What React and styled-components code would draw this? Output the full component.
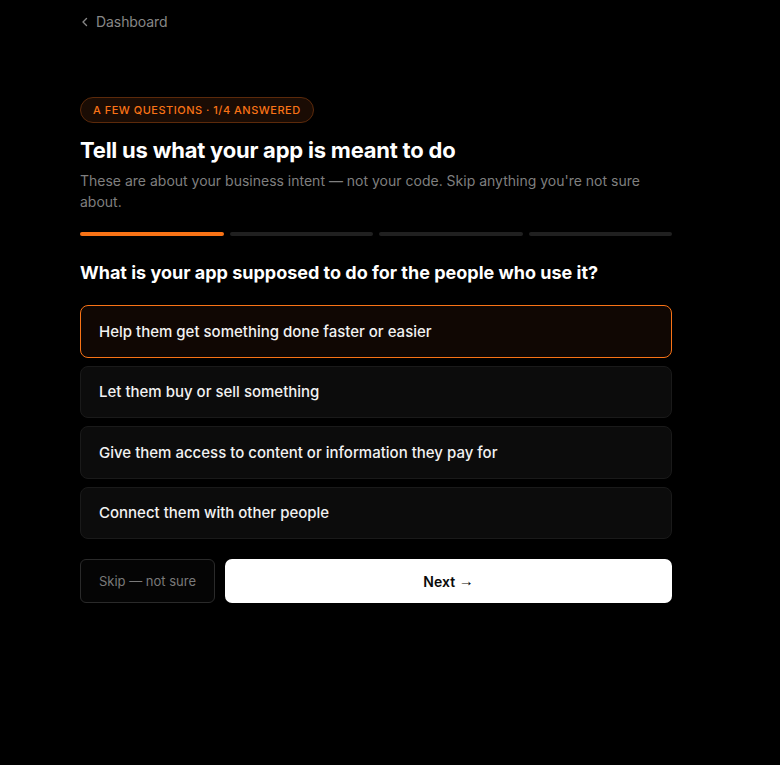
import React, { useState } from "react";
import styled, { createGlobalStyle } from "styled-components";

const Global = createGlobalStyle`
  html, body { margin: 0; padding: 0; background: #000; }
  body { font-family: Inter, "Noto Sans", sans-serif; color: #fff; -webkit-font-smoothing: antialiased; }
  * { box-sizing: border-box; }
`;

const Page = styled.div`
  min-height: 765px;
  background: #000;
  padding: 13px 0 40px 80px;
`;

const Column = styled.div`
  width: 592px;
  display: flex;
  flex-direction: column;
`;

const Back = styled.a`
  display: inline-flex;
  align-items: center;
  gap: 6px;
  color: #878787;
  font-size: 14px;
  line-height: 18px;
  letter-spacing: -0.005em;
  text-decoration: none;
  cursor: pointer;
  align-self: flex-start;
`;

const Badge = styled.div`
  align-self: flex-start;
  margin-top: 66px;
  height: 26px;
  padding: 0 12px;
  display: inline-flex;
  align-items: center;
  border-radius: 999px;
  border: 1px solid #5c2a0b;
  background: #1a0c04;
  color: #f97316;
  font-size: 11px;
  font-weight: 500;
  letter-spacing: 0.045em;
  text-transform: uppercase;
`;

const Title = styled.h1`
  margin: 13px 0 0;
  font-size: 22px;
  line-height: 28px;
  font-weight: 700;
  letter-spacing: -0.01em;
  color: #fff;
`;

const Sub = styled.p`
  margin: 6px 0 0;
  font-size: 14px;
  line-height: 21px;
  color: #7f7f7f;
`;

const Progress = styled.div`
  margin-top: 20px;
  display: grid;
  grid-template-columns: repeat(4, 1fr);
  gap: 6px;
`;

const Seg = styled.div`
  height: 4px;
  border-radius: 2px;
  background: ${(p) => (p.$done ? "#f97316" : "#202020")};
`;

const Question = styled.h2`
  margin: 25px 0 0;
  font-size: 18px;
  line-height: 24px;
  font-weight: 700;
  color: #fff;
`;

const Options = styled.div`
  margin-top: 20px;
  display: flex;
  flex-direction: column;
  gap: 8px;
`;

const Option = styled.button`
  display: flex;
  align-items: center;
  width: 100%;
  height: 52.5px;
  padding: 0 18px;
  border-radius: 8px;
  border: 1px solid ${(p) => (p.$selected ? "#f97316" : "#1a1a1a")};
  background: ${(p) => (p.$selected ? "#100703" : "#0c0c0c")};
  color: #f2f2f2;
  font-family: inherit;
  font-size: 15px;
  font-weight: 500;
  text-align: left;
  cursor: pointer;
`;

const Actions = styled.div`
  margin-top: 20px;
  display: flex;
  gap: 10px;
`;

const SkipBtn = styled.button`
  width: 135px;
  height: 44px;
  border-radius: 6px;
  border: 1px solid #2a2a2a;
  background: #050505;
  color: #7a7a7a;
  font-family: inherit;
  font-size: 13px;
  cursor: pointer;
`;

const NextBtn = styled.button`
  flex: 1;
  height: 44px;
  border-radius: 7px;
  border: none;
  background: #fff;
  color: #0a0a0a;
  font-family: inherit;
  font-size: 14px;
  font-weight: 600;
  cursor: pointer;
`;

const Arrow = styled.span`
  font-family: "Liberation Sans", Arial, sans-serif;
  font-weight: 400;
  font-size: 15px;
  vertical-align: 1px;
`;

const options = [
  "Help them get something done faster or easier",
  "Let them buy or sell something",
  "Give them access to content or information they pay for",
  "Connect them with other people",
];

export default function App() {
  const [sel, setSel] = useState(0);
  return (
    <Page>
      <Global />
      <Column>
        <Back>
          <svg width="10" height="10" viewBox="0 0 10 10" fill="none">
            <path d="M6.5 1.5L3 5l3.5 3.5" stroke="#878787" strokeWidth="1.4" strokeLinecap="round" strokeLinejoin="round" />
          </svg>
          Dashboard
        </Back>
        <Badge>A few questions · 1/4 answered</Badge>
        <Title>Tell us what your app is meant to do</Title>
        <Sub>These are about your business intent — not your code. Skip anything you're not sure about.</Sub>
        <Progress>
          <Seg $done />
          <Seg />
          <Seg />
          <Seg />
        </Progress>
        <Question>What is your app supposed to do for the people who use it?</Question>
        <Options>
          {options.map((o, i) => (
            <Option key={o} $selected={sel === i} onClick={() => setSel(i)}>
              {o}
            </Option>
          ))}
        </Options>
        <Actions>
          <SkipBtn>Skip — not sure</SkipBtn>
          <NextBtn>
            Next <Arrow>→</Arrow>
          </NextBtn>
        </Actions>
      </Column>
    </Page>
  );
}
